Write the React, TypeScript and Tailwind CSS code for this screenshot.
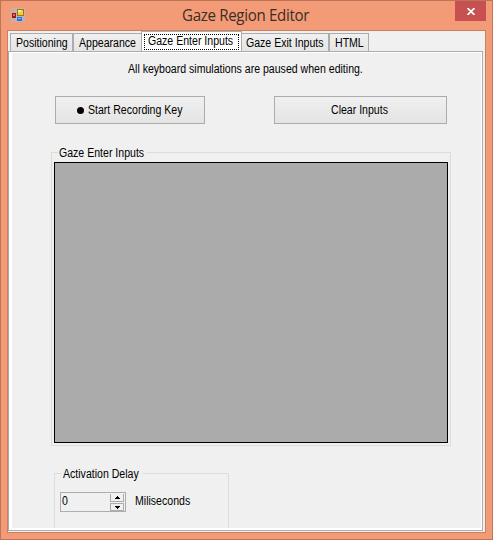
import React from "react";

const tabBase =
  "flex h-[18px] shrink-0 items-center border border-b-0 border-[#acacac] bg-linear-to-b from-[#f0f0f0] to-[#e5e5e5] whitespace-nowrap";

function FormIcon() {
  return (
    <svg width="14" height="14" viewBox="0 0 14 14" shapeRendering="crispEdges">
      <path d="M0 0h14v14H0z" fill="#b3b9bc" />
      <path d="M1 1h3v3H1zM1 11h3v2H1zM12 10h1v3h-1z" fill="#e8a283" />
      <path d="M1 5h4v5H1z" fill="#a3160f" />
      <path d="M2 6h2v2H2z" fill="#ed665c" />
      <path d="M6 1h7v7H6z" fill="#a87508" />
      <path d="M7 2h5v5H7z" fill="#f9ca39" />
      <path d="M7 2h3v2H7z" fill="#ffec9b" />
      <path d="M6 9h5v4H6z" fill="#326dde" />
      <path d="M7 10h3v1H7z" fill="#87b8ff" />
    </svg>
  );
}

// Condensed form text, as the dialog's bitmap-style font draws it.
function Label({ children }: { children: React.ReactNode }) {
  return <span className="inline-block origin-left scale-x-[0.88] whitespace-nowrap">{children}</span>;
}

export default function App() {
  return (
    <div className="flex h-[540px] w-[493px] flex-col overflow-hidden border border-[#bc745a] bg-[#f29b76] font-['Liberation_Sans',sans-serif] text-[12px] leading-[14px] text-black">
      <header className="flex h-[29px] shrink-0 items-start pl-[10px] pr-[6px]">
        <div className="mt-[7px]"><FormIcon /></div>
        <h1 className="ml-[157px] mt-[4px] w-[132px] origin-left scale-x-[0.94] whitespace-nowrap font-['Open_Sans',sans-serif] text-[16px] leading-[20px] tracking-[-0.32px] text-[#3b2d27]">Gaze Region Editor</h1>
        <button aria-label="Close" className="ml-auto flex h-5 w-[31px] items-center justify-center bg-[#c75050]">
          <svg width="8" height="7" viewBox="0 0 8 7" stroke="white" strokeWidth="1.7"><path d="M.5 0l7 7M7.5 0l-7 7" /></svg>
        </button>
      </header>

      <main className="mx-[6px] flex h-[503px] shrink-0 flex-col border border-[#c78062] bg-[#f0f0f0]">
        <nav className="flex h-5 shrink-0 items-end pl-[2px]">
          <div className={`${tabBase} w-[63px] pl-[5px]`}><Label>Positioning</Label></div>
          <div className={`${tabBase} w-[68px] border-r-0 pl-[5px]`}><Label>Appearance</Label></div>
          <div className="flex h-5 w-[101px] shrink-0 border border-b-0 border-[#acacac] bg-white p-[2px] pb-[1px]">
            <div className="flex h-4 w-full items-center whitespace-nowrap border border-dotted border-black pb-[2px] pl-[3px]"><Label>Gaze Enter Inputs</Label></div>
          </div>
          <div className={`${tabBase} w-[87px] border-l-0 pl-[4px]`}><Label>Gaze Exit Inputs</Label></div>
          <div className={`${tabBase} w-[40px] pl-[5px]`}><Label>HTML</Label></div>
        </nav>

        <section className="mr-[2px] h-[480px] shrink-0 border border-[#acacac] bg-white pl-[3px] pr-px pt-px pb-[2px]">
          <div className="flex h-[475px] flex-col overflow-hidden bg-[#f0f0f0]">
            <p className="ml-[116px] mt-[9px]"><Label>All keyboard simulations are paused when editing.</Label></p>
            <div className="ml-[43px] mt-[20px] flex shrink-0 gap-[69px]">
              <button className="flex h-[28px] w-[150px] items-center border border-[#acacac] bg-linear-to-b from-[#f0f0f0] to-[#e4e4e4] pl-[21px]">
                <span className="mr-1 h-[7px] w-[7px] shrink-0 rounded-full bg-black" /><Label>Start Recording Key</Label>
              </button>
              <button className="flex h-[28px] w-[173px] items-center border border-[#acacac] bg-linear-to-b from-[#f0f0f0] to-[#e4e4e4] pl-[56px]"><Label>Clear Inputs</Label></button>
            </div>
            <div className="ml-[39px] mt-[28px] h-[294px] w-[400px] shrink-0 border border-[#dcdcdc]">
              <div className="-mt-[7px] ml-[6px] h-[14px] w-[89px] bg-[#f0f0f0] pl-px"><Label>Gaze Enter Inputs</Label></div>
              <div className="ml-[2px] mt-[2px] h-[281px] w-[394px] border border-black bg-[#ababab]" />
            </div>
            <div className="ml-[42px] mt-[27px] h-[70px] w-[175px] shrink-0 border border-[#dcdcdc]">
              <div className="-mt-[7px] ml-[6px] h-[14px] w-[82px] bg-[#f0f0f0] pl-[2px]"><Label>Activation Delay</Label></div>
              <div className="ml-[5px] mt-[11px] flex items-center">
                <div className="flex h-5 w-[66px] border border-[#abadb3]">
                  <span className="w-[49px] pl-px pt-px"><Label>0</Label></span>
                  <div className="flex w-[14px] flex-col gap-px pt-px">
                    <button aria-label="Increase" className="flex h-2 items-center justify-center border border-t-0 border-[#acacac]">
                      <svg width="5" height="3" viewBox="0 0 5 3" shapeRendering="crispEdges"><path d="M2 0h1v1h1v1h1v1H0V2h1V1h1z" /></svg>
                    </button>
                    <button aria-label="Decrease" className="flex h-2 items-center justify-center border border-[#acacac]">
                      <svg width="5" height="3" viewBox="0 0 5 3" shapeRendering="crispEdges"><path d="M0 0h5v1H4v1H3v1H2V2H1V1H0z" /></svg>
                    </button>
                  </div>
                </div>
                <span className="ml-[9px] -mt-[2px]"><Label>Miliseconds</Label></span>
              </div>
            </div>
          </div>
        </section>
      </main>
    </div>
  );
}
